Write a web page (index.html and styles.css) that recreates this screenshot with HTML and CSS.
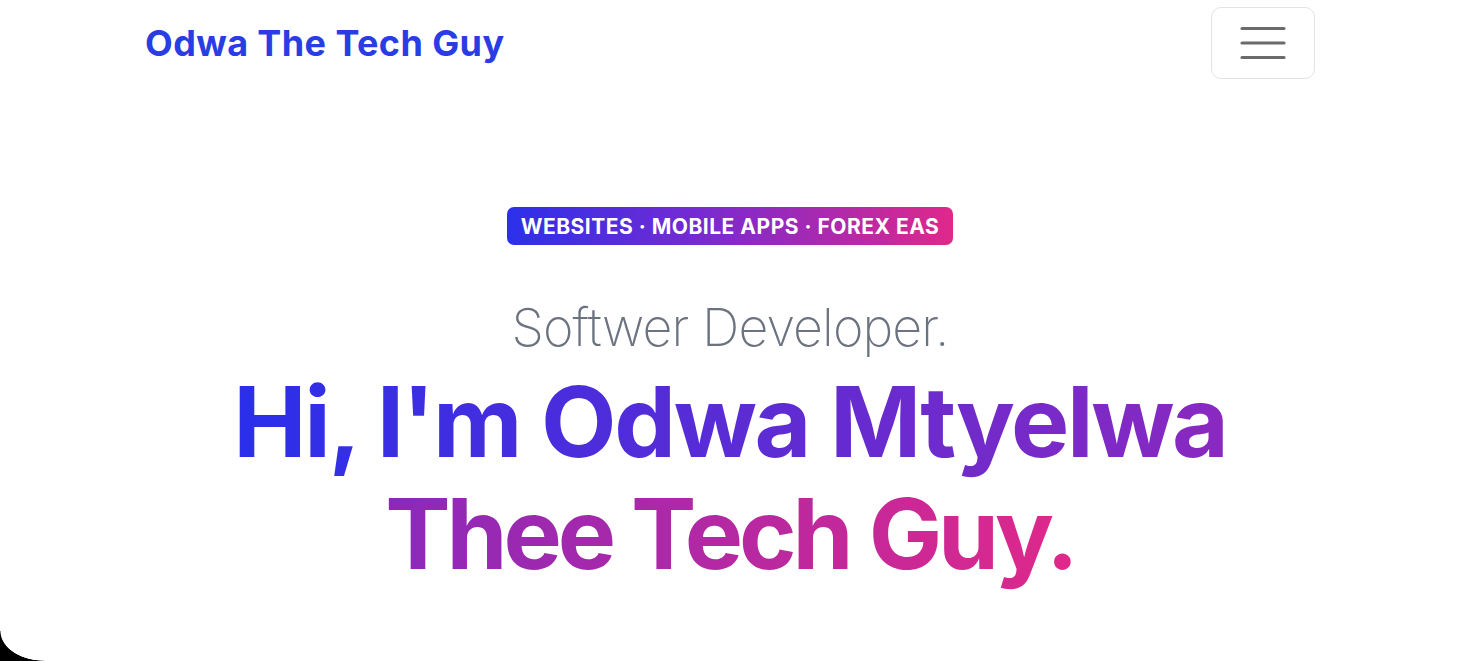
FILE: index.html
```html
<!DOCTYPE html>
<html lang="en">
<head>
<meta charset="utf-8">
<title>Odwa The Tech Guy</title>
<link rel="stylesheet" href="styles.css">
</head>
<body>
<div class="page">
  <header class="topbar">
    <a class="brand" href="#">Odwa The Tech Guy</a>
    <button class="menu-btn" aria-label="Menu">
      <svg width="46" height="34" viewBox="0 0 46 34">
        <path d="M2 2.5H44M2 17H44M2 31.5H44" stroke="#6b6b6b" stroke-width="3.2" stroke-linecap="round"/>
      </svg>
    </button>
  </header>
  <main class="hero">
    <div class="badge">WEBSITES · MOBILE APPS · FOREX EAS</div>
    <p class="role">Softwer Developer.</p>
    <h1 class="title">
      <span class="line line-1">Hi, I'm Odwa Mtyelwa</span>
      <span class="line line-2">Thee Tech Guy.</span>
    </h1>
  </main>
</div>
<div class="corner"></div>
</body>
</html>
```

FILE: styles.css
```css
* { box-sizing: border-box; }
html, body {
  margin: 0;
  background: #fff;
  height: 100%;
  overflow: hidden;
}
body {
  font-family: Inter, "Open Sans", "Liberation Sans", sans-serif;
}
.page {
  padding-right: 14px;
}
.topbar {
  width: 1170px;
  margin: 0 auto;
  padding-top: 7px;
  display: flex;
  align-items: center;
  justify-content: space-between;
}
.brand {
  color: #2a3de4;
  font-weight: 700;
  font-size: 36px;
  letter-spacing: 0.4px;
  text-decoration: none;
}
.menu-btn {
  width: 104px;
  height: 72px;
  border: 1px solid #e3e3e3;
  border-radius: 10px;
  background: #fff;
  display: flex;
  align-items: center;
  justify-content: center;
  padding: 0;
}
.hero {
  display: flex;
  flex-direction: column;
  align-items: center;
  padding-top: 128px;
}
.badge {
  background: linear-gradient(90deg, #2b30ea 0%, #7a2ad0 45%, #e0288a 100%);
  color: #fff;
  font-weight: 700;
  font-size: 21px;
  letter-spacing: 0.5px;
  height: 38px;
  padding: 0 14px;
  border-radius: 7px;
  display: flex;
  align-items: center;
}
.role {
  margin: 52px 0 0;
  color: #6b7280;
  font-weight: 200;
  font-size: 52px;
  letter-spacing: -0.9px;
  line-height: 1.2;
}
.title {
  margin: 7px 0 0;
  font-weight: 700;
  font-size: 98px;
  line-height: 112px;
  text-align: center;
  display: flex;
  flex-direction: column;
  align-items: center;
}
.line {
  -webkit-background-clip: text;
  background-clip: text;
  color: transparent;
}
.line-1 {
  letter-spacing: -2.3px;
  background-image: linear-gradient(90deg, #2a2fea 0%, #8a29c0 100%);
}
.line-2 {
  letter-spacing: -4.1px;
  background-image: linear-gradient(90deg, #8a29ba 0%, #e0288a 100%);
}
.corner {
  position: fixed;
  left: 0;
  bottom: 0;
  width: 44px;
  height: 30px;
  background: radial-gradient(ellipse 44px 30px at 100% 0, transparent 98%, #000 100%);
}
```
